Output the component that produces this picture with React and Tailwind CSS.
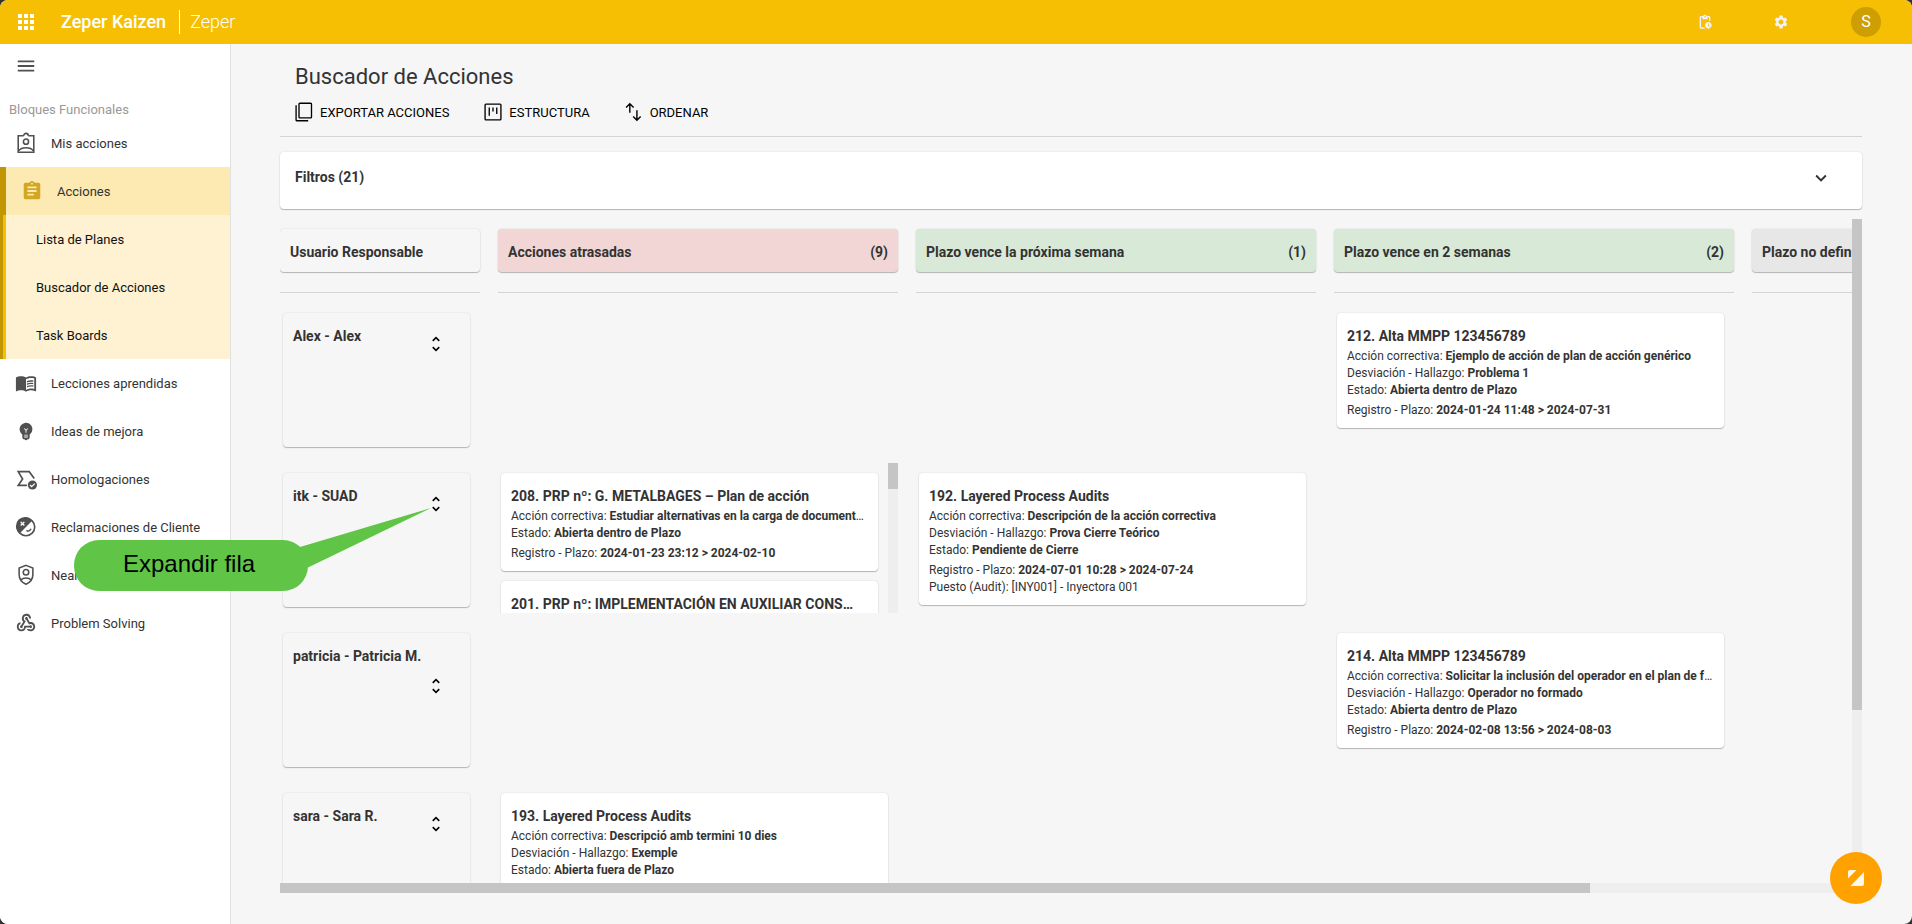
import React from 'react';
import {
    MdApps,
    MdAssignment,
    MdEmojiObjects,
    MdExpandMore,
    MdMenu,
    MdMenuBook,
    MdPendingActions,
    MdSettings,
    MdUnfoldMore,
    MdWebhook,
} from 'react-icons/md';
import { clsx } from 'clsx';

const BadgeIcon = ({ className }) => (
    <svg viewBox="0 0 24 24" className={className} fill="none" stroke="currentColor" strokeWidth="1.7" aria-hidden="true">
        <path d="M9.5 4H3.500V22H20.500V4H14.500" />
        <path d="M9.500 4a2.500 2.500 0 0 1 5 0" />
        <circle cx="12" cy="10.500" r="2.800" />
        <path d="M4 20.500c3-4.500 13-4.500 16 0" />
    </svg>
);

const LabelCheckIcon = ({ className }) => (
    <svg viewBox="0 0 24 24" className={className} fill="none" aria-hidden="true">
        <path d="M13 19H3.5L8.3 12 3.5 4H15.5L21 11.5" stroke="currentColor" strokeWidth="1.8" />
        <circle cx="19" cy="18.5" r="5" fill="currentColor" />
        <path d="M16.4 18.6l1.8 1.8 3.4-3.4" stroke="#fff" strokeWidth="1.4" />
    </svg>
);

const ClaimsIcon = ({ className }) => (
    <svg viewBox="0 0 24 24" className={className} fill="none" aria-hidden="true">
        <circle cx="12" cy="12" r="9.5" stroke="currentColor" strokeWidth="1.8" />
        <path d="M19 5A10 10 0 1 0 5 19z" fill="currentColor" />
        <path d="M6.2 6.4l4 4M10.2 6.4l-4 4" stroke="#fff" strokeWidth="1.5" />
        <path d="M12.5 15.6c1.8 1.4 4 .8 5-1.6" stroke="currentColor" strokeWidth="1.6" />
    </svg>
);

const ShieldPersonIcon = ({ className }) => (
    <svg viewBox="0 0 24 24" className={className} fill="none" stroke="currentColor" strokeWidth="1.7" aria-hidden="true">
        <path d="M12 1.500L19.500 4.500v7c0 4.900-3 8.800-7.500 10.600-4.500-1.800-7.500-5.700-7.500-10.600v-7z" />
        <circle cx="12" cy="9" r="3" />
        <path d="M6 17.500c3.500-3 8.500-3 12 0" />
    </svg>
);

const CopyIcon = ({ className }) => (
    <svg viewBox="0 0 24 24" className={className} fill="none" stroke="currentColor" strokeWidth="1.6" aria-hidden="true">
        <rect x="6" y="1.5" width="15" height="17.5" rx="1" />
        <path d="M2.5 4v17.5a1 1 0 0 0 1 1H17" />
    </svg>
);

const StructureIcon = ({ className }) => (
    <svg viewBox="0 0 24 24" className={className} fill="none" stroke="currentColor" strokeWidth="1.6" aria-hidden="true">
        <rect x="2.5" y="2.5" width="19" height="19" rx="1" />
        <path d="M7.5 6.5v10M12 6.5v5M16.5 6.5v8" />
    </svg>
);

const SortIcon = ({ className }) => (
    <svg viewBox="0 0 24 24" className={className} fill="none" stroke="currentColor" strokeWidth="1.7" aria-hidden="true">
        <path d="M7 13V2M2.5 6.5L7 2l4.500 4.500M15.500 10v12M11 17.500l4.500 4.500 4.500-4.500" />
    </svg>
);

const navItems = [
    { name: 'Mis acciones', icon: BadgeIcon },
    {
        name: 'Acciones',
        icon: MdAssignment,
        active: true,
        children: ['Lista de Planes', 'Buscador de Acciones', 'Task Boards'],
    },
    { name: 'Lecciones aprendidas', icon: MdMenuBook },
    { name: 'Ideas de mejora', icon: MdEmojiObjects },
    { name: 'Homologaciones', icon: LabelCheckIcon },
    { name: 'Reclamaciones de Cliente', icon: ClaimsIcon },
    { name: 'Near Miss', icon: ShieldPersonIcon },
    { name: 'Problem Solving', icon: MdWebhook },
];

const toolbar = [
    { name: 'EXPORTAR ACCIONES', icon: CopyIcon },
    { name: 'ESTRUCTURA', icon: StructureIcon },
    { name: 'ORDENAR', icon: SortIcon },
];

const columns = [
    { name: 'Acciones atrasadas', count: 9, color: 'bg-[#f1d6d5]' },
    { name: 'Plazo vence la próxima semana', count: 1, color: 'bg-[#d8ead7]' },
    { name: 'Plazo vence en 2 semanas', count: 2, color: 'bg-[#d8ead7]' },
    { name: 'Plazo no definido', count: 0, color: 'bg-[#e7e7e7]' },
];

const rows = [
    {
        user: 'Alex - Alex',
        cells: [
            [],
            [],
            [
                {
                    title: '212. Alta MMPP 123456789',
                    action: 'Ejemplo de acción de plan de acción genérico',
                    finding: 'Problema 1',
                    status: 'Abierta dentro de Plazo',
                    dates: '2024-01-24 11:48 > 2024-07-31',
                },
            ],
            [],
        ],
    },
    {
        user: 'itk - SUAD',
        cells: [
            [
                {
                    title: '208. PRP nº: G. METALBAGES – Plan de acción',
                    action: 'Estudiar alternativas en la carga de documentos del plan',
                    status: 'Abierta dentro de Plazo',
                    dates: '2024-01-23 23:12 > 2024-02-10',
                },
                {
                    title: '201. PRP nº: IMPLEMENTACIÓN EN AUXILIAR CONS…',
                    action: 'Plan de implementación',
                    status: 'Abierta dentro de Plazo',
                    dates: '2024-01-22 10:05 > 2024-02-09',
                },
            ],
            [
                {
                    title: '192. Layered Process Audits',
                    action: 'Descripción de la acción correctiva',
                    finding: 'Prova Cierre Teórico',
                    status: 'Pendiente de Cierre',
                    dates: '2024-07-01 10:28 > 2024-07-24',
                    place: '[INY001] - Inyectora 001',
                },
            ],
            [],
            [],
        ],
    },
    {
        user: 'patricia - Patricia M.',
        cells: [
            [],
            [],
            [
                {
                    title: '214. Alta MMPP 123456789',
                    action: 'Solicitar la inclusión del operador en el plan de formación',
                    finding: 'Operador no formado',
                    status: 'Abierta dentro de Plazo',
                    dates: '2024-02-08 13:56 > 2024-08-03',
                },
            ],
            [],
        ],
    },
    {
        user: 'sara - Sara R.',
        cells: [
            [
                {
                    title: '193. Layered Process Audits',
                    action: 'Descripció amb termini 10 dies',
                    finding: 'Exemple',
                    status: 'Abierta fuera de Plazo',
                    dates: '2024-07-01 10:30 > 2024-07-11',
                },
            ],
            [],
            [],
            [],
        ],
    },
];

const cardShadow = 'rounded shadow-[0_1px_1px_rgba(0,0,0,0.24),0_0_2px_rgba(0,0,0,0.12)]';

const Header = () => (
    <header className="flex h-11 shrink-0 items-center bg-[#f6bf03] pr-[31px] pl-3.5 text-white">
        <button aria-label="Aplicaciones">
            <MdApps className="size-6" />
        </button>
        <span className="ml-[23px] text-lg font-medium">Zeper Kaizen</span>
        <span className="mr-2.5 ml-[13px] h-6 w-px bg-white" />
        <span className="text-lg font-light">Zeper</span>
        <div className="ml-auto flex items-center">
            <button aria-label="Acciones pendientes">
                <MdPendingActions className="size-4 text-[#f2f0fa]" />
            </button>
            <button aria-label="Configuración" className="ml-15">
                <MdSettings className="size-4 text-[#f2f0fa]" />
            </button>
            <button className="ml-[62px] size-[30px] rounded-full bg-[#cd9f02] text-base">S</button>
        </div>
    </header>
);

const Sidebar = () => (
    <aside className="w-[231px] shrink-0 border-r border-[#e0e0e0] bg-white text-[13px] text-[#333]">
        <button aria-label="Menú" className="mt-[11px] ml-[15px] block text-[#505050]">
            <MdMenu className="size-[22px]" />
        </button>
        <p className="mt-[23px] mb-[-1px] ml-[9px] leading-5 text-[#999]">Bloques Funcionales</p>
        <nav>
            {navItems.map((item) => (
                <React.Fragment key={item.name}>
                    <a
                        href="#"
                        className={clsx(
                            'flex h-12 items-center gap-3.5 pl-[15px]',
                            item.active && 'border-l-6 border-[#c29602] bg-[#fde9b2]'
                        )}
                    >
                        <item.icon className={clsx('size-[22px]', item.active ? 'text-[#d2a724]' : 'text-[#505050]')} />
                        <span className="pt-0.5">{item.name}</span>
                    </a>
                    {item.children && (
                        <div className="border-l-3 border-[#c29602] bg-[#fff2d3] text-[#111]">
                            {item.children.map((child) => (
                                <a key={child} href="#" className="flex h-12 items-center border-l-3 border-[#f6bf03] pt-0.5 pl-[30px]">
                                    {child}
                                </a>
                            ))}
                        </div>
                    )}
                </React.Fragment>
            ))}
        </nav>
    </aside>
);

const Line = ({ label, children, className }) => (
    <p className={clsx('truncate text-xs leading-[17px]', className)}>
        {label}: {children}
    </p>
);

const ActionCard = ({ card }) => (
    <article className={clsx(cardShadow, 'mr-2.5 mb-2.5 ml-[3px] bg-white px-2.5 pt-3 pb-[9px]')}>
        <h3 className="truncate text-sm leading-[23px] font-bold">{card.title}</h3>
        <Line label="Acción correctiva"><b className="font-bold">{card.action}</b></Line>
        {card.finding && <Line label="Desviación - Hallazgo"><b className="font-bold">{card.finding}</b></Line>}
        <Line label="Estado"><b className="font-bold">{card.status}</b></Line>
        <Line label="Registro - Plazo" className="mt-[3px]"><b className="font-bold">{card.dates}</b></Line>
        {card.place && <Line label="Puesto (Audit)">{card.place}</Line>}
    </article>
);

const Cell = ({ cards }) => (
    <div className="flex h-[150px] w-[400px] shrink-0 overflow-hidden">
        <div className="min-w-0 flex-1 pt-2.5">
            {cards.map((card) => (
                <ActionCard key={card.title} card={card} />
            ))}
        </div>
        {cards.length > 1 && (
            <div className="w-2.5 bg-[#eee]">
                <div className="h-[26px] bg-[#c5c5c5]" />
            </div>
        )}
    </div>
);

const UserCell = ({ name }) => (
    <div className="h-[150px] w-[200px] shrink-0 pt-2.5 pr-2.5 pb-1.5 pl-[3px]">
        <div className={clsx(cardShadow, 'flex h-full flex-wrap content-start items-start justify-between gap-x-3 pt-3 pr-6 pl-2.5')}>
            <h3 className="text-sm leading-[22px] font-bold">{name}</h3>
            <button aria-label={`Expandir fila ${name}`} className="mt-[9px] ml-auto text-black">
                <MdUnfoldMore className="size-5" />
            </button>
        </div>
    </div>
);

const Board = () => (
    <section className="mt-2.5 flex min-h-0 flex-1 flex-col">
        <div className="flex min-h-0 flex-1">
            <div className="min-w-0 flex-1 overflow-hidden">
                <div className="flex gap-[18px] pt-2.5 text-sm font-bold">
                    <div className="w-[200px] shrink-0 border-b border-[#d4d4d4] pb-5">
                        <h2 className={clsx(cardShadow, 'h-[43px] px-2.5 leading-[46px]')}>Usuario Responsable</h2>
                    </div>
                    {columns.map((column) => (
                        <div key={column.name} className="w-[400px] shrink-0 border-b border-[#d4d4d4] pb-5">
                            <h2 className={clsx(cardShadow, column.color, 'flex h-[43px] justify-between px-2.5 leading-[46px]')}>
                                <span>{column.name}</span>
                                {column.count > 0 && <span>({column.count})</span>}
                            </h2>
                        </div>
                    ))}
                </div>
                {rows.map((row) => (
                    <div key={row.user} className="mt-2.5 flex gap-[18px]">
                        <UserCell name={row.user} />
                        {row.cells.map((cards, index) => (
                            <Cell key={columns[index].name} cards={cards} />
                        ))}
                    </div>
                ))}
            </div>
            <div className="w-2.5 bg-[#eee]">
                <div className="h-[74%] bg-[#c5c5c5]" />
            </div>
        </div>
        <div className="mr-2.5 h-2.5 shrink-0 bg-[#eee]">
            <div className="h-full w-5/6 bg-[#c5c5c5]" />
        </div>
    </section>
);

// Help bubble pointing at the expand button of a row
const Callout = () => (
    <div className="absolute top-[508px] left-[74px] h-[83px] w-[358px]">
        <svg viewBox="0 0 358 83" className="absolute inset-0 h-full w-full fill-[#60c546]" aria-hidden="true">
            <rect x="0" y="32" width="234" height="51" rx="25" />
            <path d="M226 39L357 0L233 60z" />
        </svg>
        <p className="relative ml-[49px] pt-[42px] font-['Liberation_Sans',Arial,sans-serif] text-2xl leading-[28px] text-black">
            Expandir fila
        </p>
    </div>
);

export default function App() {
    return (
        <div className="h-screen bg-[#333]">
            <div className="relative flex h-full flex-col overflow-hidden rounded-lg bg-[#f6f6f6] font-[Roboto,sans-serif] text-[#333]">
                <Header />
                <div className="flex min-h-0 flex-1">
                    <Sidebar />
                    <main className="flex min-w-0 flex-1 flex-col pt-[19px] pr-[50px] pb-[31px] pl-[49px]">
                        <h1 className="ml-[15px] text-[22px] leading-7">Buscador de Acciones</h1>
                        <div className="mt-[11px] ml-3.5 flex h-5 items-center gap-[34px] text-[13px] text-black">
                            {toolbar.map((tool) => (
                                <button key={tool.name} className="flex items-center gap-1.5">
                                    <tool.icon className="size-5" />
                                    <span className="pt-0.5">{tool.name}</span>
                                </button>
                            ))}
                        </div>
                        <hr className="mt-3.5 border-[#d4d4d4]" />
                        <button
                            aria-expanded="false"
                            className={clsx(cardShadow, 'mt-[15px] flex h-[57px] shrink-0 items-start justify-between bg-white pt-3.5 pr-[30px] pl-[15px]')}
                        >
                            <span className="text-sm leading-[22px] font-bold">Filtros (21)</span>
                            <MdExpandMore className="mt-px size-[22px]" />
                        </button>
                        <Board />
                    </main>
                </div>
                <Callout />
                <button
                    aria-label="Soporte"
                    className="absolute right-[30px] bottom-5 flex size-[52px] items-center justify-center rounded-full bg-[#ffa200]"
                >
                    <svg viewBox="0 0 16 16" className="size-4 fill-[#fff8ea]" aria-hidden="true">
                        <path d="M2 0H8.500L0 8.500V2A2 2 0 0 1 2 0z" />
                        <path d="M16 2V14A2 2 0 0 1 14 16H2.500z" />
                    </svg>
                </button>
            </div>
        </div>
    );
}
